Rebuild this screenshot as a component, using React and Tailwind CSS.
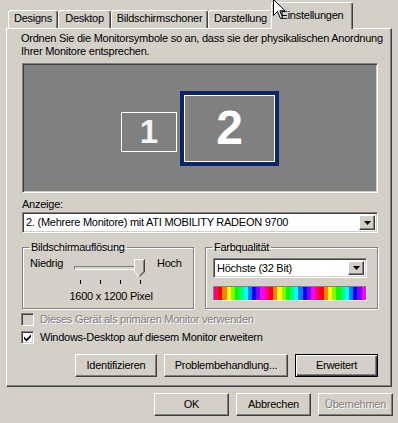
import React from 'react';

const RAISED = 'border border-t-white border-l-white border-r-[#404040] border-b-[#404040] shadow-[inset_-1px_-1px_0_#808080]';
const SUNKEN = 'border border-t-[#808080] border-l-[#808080] border-r-white border-b-white shadow-[inset_1px_1px_0_#404040,inset_-1px_-1px_0_#d4d0c8]';
const ETCHED = 'border border-[#808080] shadow-[inset_1px_1px_0_#fff,1px_1px_0_#fff]';
const GRAYTEXT = 'text-[#808080] [text-shadow:1px_1px_0_#fff]';

const TABS = [
  { label: 'Designs', w: 'w-[50px]' },
  { label: 'Desktop', w: 'w-[53px]' },
  { label: 'Bildschirmschoner', w: 'w-[97px]' },
  { label: 'Darstellung', w: 'w-[65px]' },
];

const HUES = ['#ff0080', '#ff0000', '#ff8000', '#ffff00', '#80ff00', '#00ff00', '#00ff80', '#00ffff', '#0080ff', '#0000ff', '#8000ff', '#ff00ff'];
const RAINBOW = [...HUES, ...HUES, ...HUES];

function Arrow() {
  return (
    <svg width="7" height="4" viewBox="0 0 7 4">
      <polygon points="0,0 7,0 3.5,4" fill="#000" />
    </svg>
  );
}

function Combo({ text, className }) {
  return (
    <div className={`${SUNKEN} bg-white flex items-center ${className}`}>
      <span className="flex-1 pl-[3px] whitespace-nowrap overflow-hidden">{text}</span>
      <span className={`${RAISED} w-[16px] h-[calc(100%-4px)] mr-[2px] bg-[#d4d0c8] flex items-center justify-center`}>
        <Arrow />
      </span>
    </div>
  );
}

function Btn({ children, w, dflt, disabled }) {
  const frame = dflt
    ? 'border border-black shadow-[inset_1px_1px_0_#fff,inset_-1px_-1px_0_#404040,inset_-2px_-2px_0_#808080]'
    : RAISED;
  return (
    <div className={`${frame} ${w} h-[23px] flex items-center justify-center ${disabled ? GRAYTEXT : ''}`}>
      {children}
    </div>
  );
}

function Check({ checked, disabled }) {
  return (
    <span className={`${SUNKEN} w-[13px] h-[13px] flex items-center justify-center ${disabled ? 'bg-[#d4d0c8]' : 'bg-white'}`}>
      {checked && (
        <svg width="9" height="9" viewBox="0 0 9 9">
          <polygon points="1,3.5 3.5,6 8,1.5 8,4 3.5,8.5 1,6" fill="#000" />
        </svg>
      )}
    </span>
  );
}

export default function App() {
  return (
    <div className="relative w-[398px] h-[423px] overflow-hidden bg-[#d4d0c8] text-black text-[11px] leading-[13px] tracking-[-0.25px] font-['Liberation_Sans',Arial,sans-serif]">
      {/* Reiter */}
      <div className="flex items-end h-[28px] pl-[8px]">
        {TABS.map((t) => (
          <div key={t.label}
            className={`${t.w} h-[18px] flex justify-center pt-[1px] border-t border-l border-r border-t-white border-l-white border-r-[#404040] shadow-[inset_-1px_0_0_#808080] rounded-t-[3px] whitespace-nowrap`}>
            {t.label}
          </div>
        ))}
        <div className="relative z-10 -ml-[2px] -mb-px w-[82px] h-[27px] bg-[#d4d0c8] flex justify-center pt-[6px] border-t border-l border-r border-t-white border-l-white border-r-[#404040] shadow-[inset_-1px_0_0_#808080] rounded-t-[3px]">
          Einstellungen
        </div>
      </div>

      {/* Seite */}
      <div className="ml-[6px] w-[386px] h-[359px] flex flex-col pl-[15px] pr-[13px] pt-[3px] border border-t-white border-l-white border-r-[#404040] border-b-[#404040] shadow-[inset_-1px_-1px_0_#808080]">
        <p className="-ml-[1px] whitespace-nowrap">
          Ordnen Sie die Monitorsymbole so an, dass sie der physikalischen Anordnung<br />
          Ihrer Monitore entsprechen.
        </p>

        <div className={`${SUNKEN} mt-[5px] h-[130px] bg-[#808080] flex items-center justify-center gap-[3px]`}>
          <div className="mt-[7px] w-[56px] h-[40px] border border-white flex items-center justify-center text-[33px] leading-none font-bold text-[#f4f4f4] tracking-normal">
            1
          </div>
          <div className="w-[99px] h-[75px] bg-[#0a246a] p-[4px]">
            <div className="h-full border border-white bg-[#808080] flex items-center justify-center text-[48px] leading-none font-bold text-white tracking-normal">
              2
            </div>
          </div>
        </div>

        <p className="mt-[5px]">Anzeige:</p>
        <Combo text="2. (Mehrere Monitore) mit ATI MOBILITY RADEON 9700" className="mt-[1px] h-[21px]" />

        <div className="mt-[8px] flex gap-[11px]">
          <fieldset className={`${ETCHED} w-[172px] pb-[5px]`}>
            <legend className="ml-[6px] px-[2px]">Bildschirmauflösung</legend>
            <div className="flex items-center h-[18px] pl-[7px]">
              <span className="w-[42px]">Niedrig</span>
              <div className="relative w-[76px] h-[18px]">
                <div className={`${SUNKEN} absolute left-[2px] top-[12px] w-[70px] h-[4px] shadow-none`} />
                <svg className="absolute left-[62px] top-[5px]" width="11" height="18" viewBox="0 0 11 18">
                  <path d="M0.5 0.5 H10.5 V13 L5.5 17.5 L0.5 13 Z" fill="#d4d0c8" />
                  <path d="M0.5 13 V0.5 H10" fill="none" stroke="#fff" />
                  <path d="M10.5 0.5 V13 L5.5 17.5" fill="none" stroke="#404040" />
                  <path d="M9.5 1.5 V12.6 L5.5 16.2" fill="none" stroke="#808080" />
                  <path d="M0.5 13 L5 17" fill="none" stroke="#fff" />
                </svg>
              </div>
              <span className="ml-[9px]">Hoch</span>
            </div>
            <div className="mt-[8px] flex gap-[19px] pl-[57px] h-[4px]">
              <span className="w-px h-[4px] bg-black" />
              <span className="w-px h-[4px] bg-black" />
              <span className="w-px h-[4px] bg-black" />
              <span className="w-px h-[4px] bg-black" />
            </div>
            <p className="mt-[6px] pl-[6px] text-center">1600 x 1200 Pixel</p>
          </fieldset>

          <fieldset className={`${ETCHED} w-[173px] pb-[7px]`}>
            <legend className="ml-[6px] px-[2px]">Farbqualität</legend>
            <Combo text="Höchste (32 Bit)" className="mt-[4px] ml-[7px] w-[154px] h-[20px]" />
            <div className="mt-[8px] ml-[7px] w-[154px] h-[15px] flex border border-t-[#808080] border-l-[#808080] border-r-white border-b-white">
              {RAINBOW.map((c, i) => (
                <span key={i} className="flex-1 h-full" style={{ background: c }} />
              ))}
            </div>
          </fieldset>
        </div>

        <div className="mt-[4px] -ml-[1px] flex items-center gap-[6px] h-[13px]">
          <Check disabled />
          <span className={GRAYTEXT}>Dieses Gerät als primären Monitor verwenden</span>
        </div>
        <div className="mt-[5px] -ml-[1px] flex items-center gap-[6px] h-[13px]">
          <Check checked />
          <span>Windows-Desktop auf diesem Monitor erweitern</span>
        </div>

        <div className="mt-[10px] flex justify-end gap-[7px]">
          <Btn w="w-[82px]">Identifizieren</Btn>
          <Btn w="w-[124px]">Problembehandlung...</Btn>
          <Btn w="w-[83px]" dflt>Erweitert</Btn>
        </div>
      </div>

      {/* Dialogknöpfe */}
      <div className="mt-[6px] flex justify-end gap-[7px] pr-[5px]">
        <Btn w="w-[75px]">OK</Btn>
        <Btn w="w-[75px]">Abbrechen</Btn>
        <Btn w="w-[75px]" disabled>Übernehmen</Btn>
      </div>

      {/* Mauszeiger */}
      <svg className="absolute left-[273px] -top-[1px] z-20" width="13" height="21" viewBox="0 0 13 21">
        <path d="M0.5 0.5 V16.5 L4.5 12.5 L7.5 19.5 L9.5 18.5 L6.8 11.8 H12 Z" fill="#fff" stroke="#000" strokeLinejoin="miter" />
      </svg>
    </div>
  );
}
